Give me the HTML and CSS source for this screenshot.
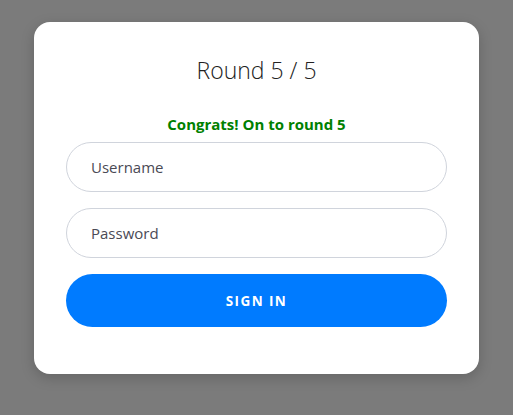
FILE: index.html
```html
<!DOCTYPE html>
<html lang="en">
<head>
<meta charset="utf-8">
<title>Round 5 / 5</title>
<link rel="stylesheet" href="styles.css">
</head>
<body>
<main class="page">
  <form class="card">
    <h1 class="title">Round 5 / 5</h1>
    <p class="status">Congrats! On to round 5</p>
    <input class="field" type="text" placeholder="Username">
    <input class="field" type="password" placeholder="Password">
    <button class="submit" type="button">SIGN IN</button>
  </form>
</main>
</body>
</html>
```
FILE: styles.css
```css
* { box-sizing: border-box; }
html, body { margin: 0; padding: 0; }
body {
  background: #7b7b7b;
  font-family: "Open Sans", "Noto Sans", sans-serif;
  width: 513px;
  height: 415px;
  overflow: hidden;
}
.page {
  padding: 22px 0 0 34px;
}
.card {
  width: 445px;
  height: 352px;
  background: #fff;
  border-radius: 16px;
  box-shadow: 0 4px 14px rgba(0, 0, 0, 0.18);
  padding: 32px 32px 0;
  display: flex;
  flex-direction: column;
}
.title {
  margin: 0;
  text-align: center;
  font-size: 23px;
  font-weight: 300;
  line-height: 32px;
  color: #222;
}
.status {
  margin: 28px 0 0;
  text-align: center;
  font-size: 15px;
  font-weight: 700;
  line-height: 20px;
  color: #008000;
}
.field {
  margin-top: 0;
  height: 50px;
  width: 100%;
  border: 1px solid #d0d4dc;
  border-radius: 25px;
  padding: 0 24px;
  font-family: inherit;
  font-size: 15px;
  color: #333;
  background: #fff;
  outline: none;
}
.field::placeholder { color: #4a4a55; }
.status + .field { margin-top: 8px; }
.field + .field { margin-top: 16px; }
.submit {
  margin-top: 16px;
  height: 53px;
  width: 100%;
  border: none;
  border-radius: 27px;
  background: #007bff;
  color: #fff;
  font-family: inherit;
  font-size: 13.5px;
  font-weight: 700;
  letter-spacing: 1.4px;
}
```
